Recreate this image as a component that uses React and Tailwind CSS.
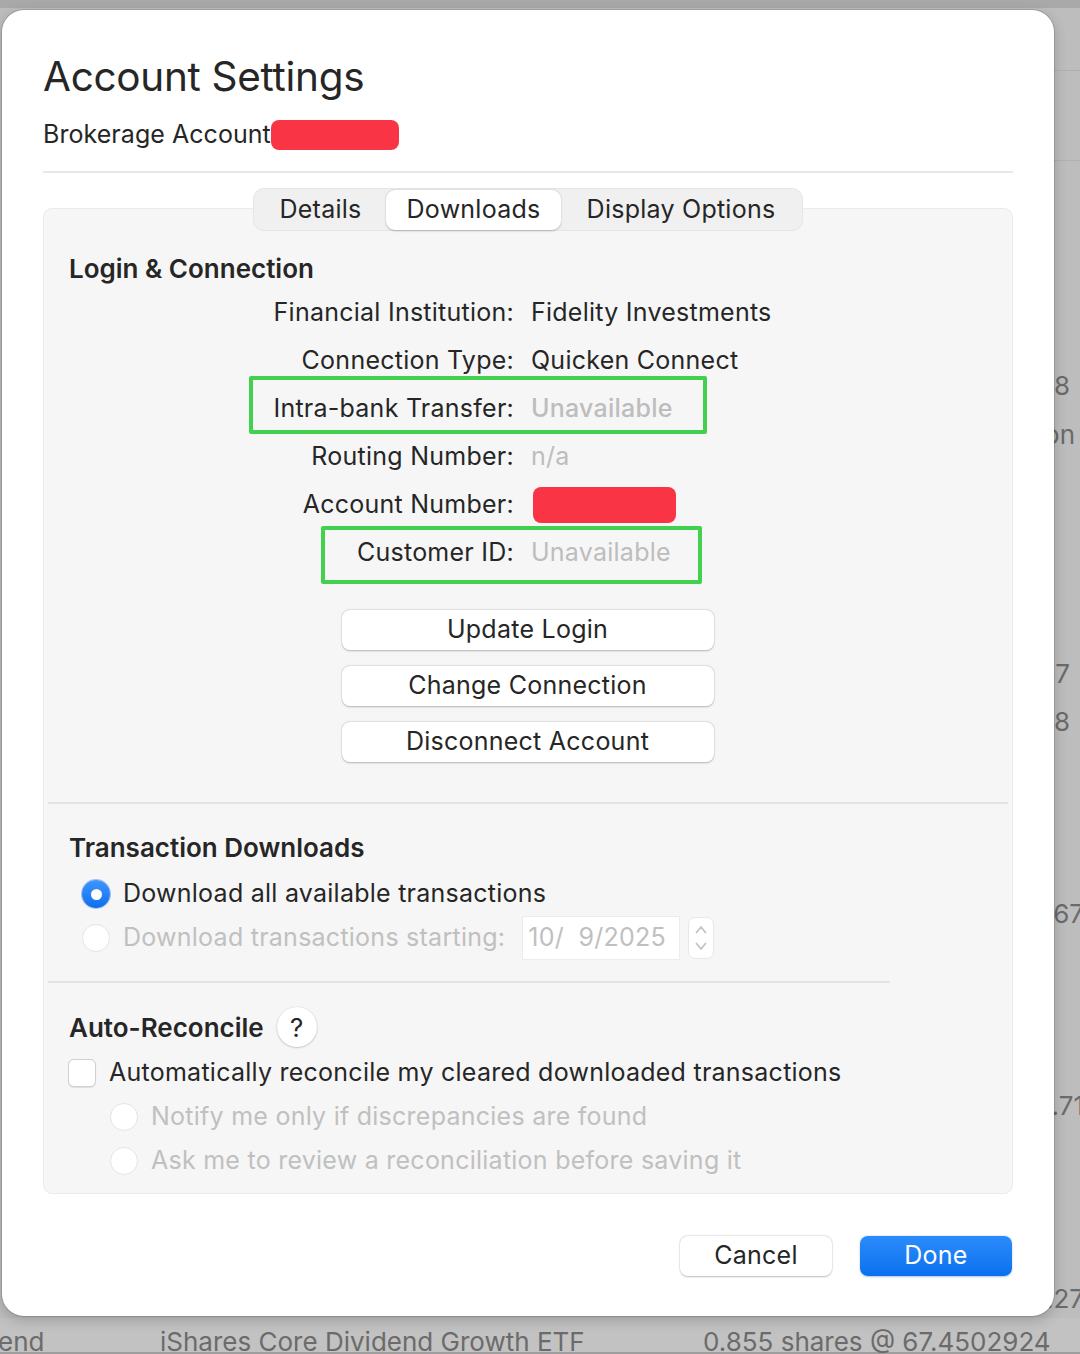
import React from "react";

const F = "font-['Inter','Noto_Sans',sans-serif]";
const T = "text-[25px] tracking-[0.25px]";

function Row({ label, value, muted, bold, children }) {
  return (
    <div className="relative flex h-[48px] items-center">
      <div className={"w-[470px] text-right text-[#262626] " + T}>{label}</div>
      <div className={"ml-[17px] " + T + " " + (muted ? "text-[#bdbdbd]" : "text-[#262626]") + (bold ? " font-medium" : "")}>
        {value}
      </div>
      {children}
    </div>
  );
}

function PushButton({ children }) {
  return (
    <div className={"flex h-[40px] w-[372px] items-center justify-center rounded-[8px] bg-white text-[#262626] shadow-[0_0.5px_2px_rgba(0,0,0,0.25),0_0_0_0.5px_rgba(0,0,0,0.06)] " + T}>
      {children}
    </div>
  );
}

function Radio({ on }) {
  if (on)
    return (
      <div className="flex h-[28px] w-[28px] items-center justify-center rounded-full bg-gradient-to-b from-[#3d95ff] to-[#0a6fec] shadow-[0_0_0_1px_rgba(0,90,220,0.35)]">
        <div className="h-[11px] w-[11px] rounded-full bg-white" />
      </div>
    );
  return <div className="h-[28px] w-[28px] rounded-full border border-[#e4e4e4] bg-white" />;
}

export default function App() {
  return (
    <div className={"relative h-[1354px] w-[1080px] overflow-hidden bg-[#bdbdbd] " + F}>
      {/* background window content */}
      <div className="absolute left-0 top-0 h-[8px] w-full bg-[#a9a9a9]" />
      <div className="absolute left-[1054px] top-[70px] h-px w-[26px] bg-[#b0b0b0]" />
      <div className="absolute left-[1054px] top-[160px] h-px w-[26px] bg-[#b0b0b0]" />
      <div className="absolute right-[10px] top-[370px] text-[26px] leading-[32px] text-[#6b6b6b]">1.58</div>
      <div className="absolute right-[5px] top-[419px] text-[26px] leading-[32px] text-[#6b6b6b]">Reinvestion</div>
      <div className="absolute right-[10px] top-[658px] text-[26px] leading-[32px] text-[#6b6b6b]">2.87</div>
      <div className="absolute right-[10px] top-[706px] text-[26px] leading-[32px] text-[#6b6b6b]">1.48</div>
      <div className="absolute right-[-4px] top-[898px] text-[26px] leading-[32px] text-[#6b6b6b]">1.67</div>
      <div className="absolute right-[-4px] top-[1090px] text-[26px] leading-[32px] text-[#6b6b6b]">2.71</div>
      <div className="absolute right-[-4px] top-[1283px] text-[26px] leading-[32px] text-[#6b6b6b]">3.27</div>
      <div className="absolute left-0 top-[1318px] h-[36px] w-full bg-[#c2c2c2]">
        <div className="absolute bottom-0 left-0 h-[2px] w-full bg-[#9e9e9e]" />
      </div>
      <div className="absolute left-[-2px] top-[1326px] text-[26px] leading-[32px] text-[#6b6b6b]">end</div>
      <div className="absolute left-[160px] top-[1326px] text-[26px] leading-[32px] text-[#6b6b6b]">iShares Core Dividend Growth ETF</div>
      <div className="absolute left-[703px] top-[1326px] text-[26px] leading-[32px] text-[#6b6b6b]">0.855 shares @ 67.4502924</div>

      {/* dialog */}
      <div className="relative z-10 ml-[2px] mt-[10px] flex h-[1306px] w-[1052px] flex-col rounded-[22px] bg-white px-[41px] pt-[43px] shadow-[0_0_0_1px_rgba(0,0,0,0.12),0_4px_14px_rgba(0,0,0,0.2)]">
        <div className="text-[40.5px] leading-[48px] tracking-[-0.3px] text-[#262626]">Account Settings</div>
        <div className="mt-[18px] flex h-[32px] items-center">
          <span className="text-[25px] tracking-[0.05px] text-[#262626]">Brokerage Account</span>
          <span className="h-[30px] w-[128px] rounded-[8px] bg-[#f93545]" />
        </div>
        <div className="mt-[20px] h-[2px] w-full bg-[#e8e8e8]" />

        {/* tabs */}
        <div className="relative z-10 mt-[15px] flex justify-center">
          <div className="flex h-[43px] items-center rounded-[11px] border border-[#e6e6e6] bg-[#f0f0f0] px-[1px]">
            <div className={"flex h-[40px] w-[131px] items-center justify-center text-[#262626] " + T}>Details</div>
            <div className={"flex h-[40px] w-[175px] items-center justify-center rounded-[9px] bg-white text-[#262626] shadow-[0_0.5px_2px_rgba(0,0,0,0.25)] " + T}>Downloads</div>
            <div className={"flex h-[40px] w-[240px] items-center justify-center text-[#262626] " + T}>Display Options</div>
          </div>
        </div>

        {/* content box */}
        <div className="-mt-[23px] h-[986px] rounded-[9px] border border-[#ebebeb] bg-[#f6f6f6] pt-[44px]">
          <div className="pl-[25px] text-[26px] font-semibold leading-[32px] text-[#262626]">Login &amp; Connection</div>
          <div className="mt-[4px]">
            <Row label="Financial Institution:" value="Fidelity Investments" />
            <Row label="Connection Type:" value="Quicken Connect" />
            <Row label="Intra-bank Transfer:" value="Unavailable" muted bold>
              <div className="pointer-events-none absolute left-[205px] top-[-9px] h-[58px] w-[458px] rounded-[2px] border-[4px] border-[#42d04f]" />
            </Row>
            <Row label="Routing Number:" value="n/a" muted />
            <Row label="Account Number:" value={<span className="block h-[36px] w-[143px] translate-x-[2px] rounded-[8px] bg-[#f93545]" />} />
            <Row label="Customer ID:" value="Unavailable" muted>
              <div className="pointer-events-none absolute left-[277px] top-[-3px] h-[58px] w-[381px] rounded-[2px] border-[4px] border-[#42d04f]" />
            </Row>
          </div>
          <div className="mt-[33px] flex flex-col items-center gap-[16px] pr-[1px]">
            <PushButton>Update Login</PushButton>
            <PushButton>Change Connection</PushButton>
            <PushButton>Disconnect Account</PushButton>
          </div>
          <div className="mx-[4px] mt-[40px] h-[2px] bg-[#e3e3e3]" />

          <div className="mt-[28px] pl-[25px] text-[26px] font-semibold leading-[32px] text-[#262626]">Transaction Downloads</div>
          <div className="mt-[8px] pl-[38px]">
            <div className="flex h-[44px] items-center gap-[13px]">
              <Radio on />
              <span className={"text-[#262626] " + T}>Download all available transactions</span>
            </div>
            <div className="flex h-[44px] items-center">
              <Radio />
              <span className={"ml-[13px] text-[#c0c0c0] " + T}>Download transactions starting:</span>
              <div className={"ml-[17px] flex h-[44px] w-[158px] items-center border border-[#ececec] bg-white pl-[5px] text-[#c0c0c0] whitespace-pre " + T}>10/  9/2025</div>
              <div className="ml-[8px] flex h-[42px] w-[26px] flex-col items-center justify-center rounded-[7px] border border-[#e8e8e8] bg-white">
                <svg width="16" height="34" viewBox="0 0 16 34" fill="none" stroke="#c4c4c4" strokeWidth="1.8" strokeLinecap="round" strokeLinejoin="round">
                  <path d="M3.5 11.5 L8 6 L12.5 11.5" />
                  <path d="M3.5 22.5 L8 28 L12.5 22.5" />
                </svg>
              </div>
            </div>
          </div>
          <div className="ml-[4px] mt-[21px] h-[2px] w-[842px] bg-[#e3e3e3]" />

          <div className="mt-[22px] flex h-[44px] items-center pl-[25px]">
            <span className="text-[26px] font-semibold text-[#262626]">Auto-Reconcile</span>
            <div className="ml-[13px] flex h-[40px] w-[40px] items-center justify-center rounded-full bg-white text-[26px] text-[#262626] shadow-[0_0.5px_2px_rgba(0,0,0,0.3)]">?</div>
          </div>
          <div className="mt-[2px] flex h-[44px] items-center pl-[24px]">
            <div className="h-[28px] w-[28px] rounded-[6px] border border-[#d2d2d2] bg-white shadow-[0_0.5px_1px_rgba(0,0,0,0.1)]" />
            <span className={"ml-[13px] text-[#262626] " + T}>Automatically reconcile my cleared downloaded transactions</span>
          </div>
          <div className="pl-[66px]">
            <div className="flex h-[44px] items-center gap-[13px]">
              <Radio />
              <span className={"text-[#c0c0c0] " + T}>Notify me only if discrepancies are found</span>
            </div>
            <div className="flex h-[44px] items-center gap-[13px]">
              <Radio />
              <span className={"text-[#c0c0c0] " + T}>Ask me to review a reconciliation before saving it</span>
            </div>
          </div>
        </div>

        {/* footer */}
        <div className="mt-[42px] flex justify-end gap-[28px] pr-[1px]">
          <div className={"flex h-[40px] w-[152px] items-center justify-center rounded-[8px] bg-white text-[#262626] shadow-[0_0.5px_2px_rgba(0,0,0,0.25),0_0_0_0.5px_rgba(0,0,0,0.06)] " + T}>Cancel</div>
          <div className={"flex h-[40px] w-[152px] items-center justify-center rounded-[8px] bg-gradient-to-b from-[#2a8cfb] to-[#0a70ee] text-white shadow-[0_0.5px_2px_rgba(0,80,200,0.35)] " + T}>Done</div>
        </div>
      </div>
    </div>
  );
}
